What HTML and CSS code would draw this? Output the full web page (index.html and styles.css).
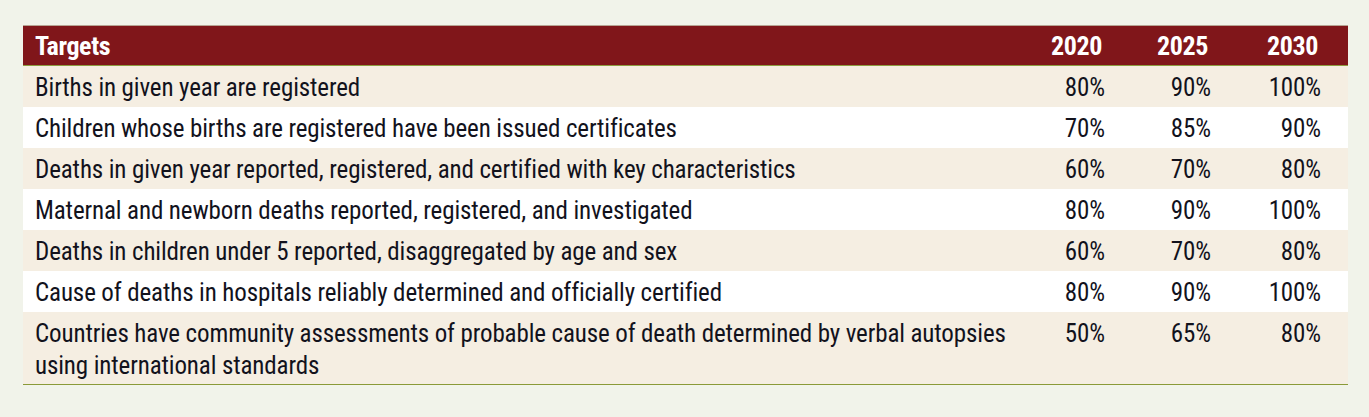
FILE: index.html
```html
<!DOCTYPE html>
<html lang="en">
<head>
<meta charset="utf-8">
<title>Targets</title>
<link rel="stylesheet" href="styles.css">
</head>
<body>
<table class="targets">
  <colgroup>
    <col class="col-label">
    <col class="col-num col-a">
    <col class="col-num col-b">
    <col class="col-num col-c">
  </colgroup>
  <thead>
    <tr>
      <th class="label">Targets</th>
      <th class="num">2020</th>
      <th class="num">2025</th>
      <th class="num">2030</th>
    </tr>
  </thead>
  <tbody>
    <tr class="shade">
      <td class="label">Births in given year are registered</td>
      <td class="num">80%</td><td class="num">90%</td><td class="num">100%</td>
    </tr>
    <tr>
      <td class="label">Children whose births are registered have been issued certificates</td>
      <td class="num">70%</td><td class="num">85%</td><td class="num">90%</td>
    </tr>
    <tr class="shade">
      <td class="label">Deaths in given year reported, registered, and certified with key characteristics</td>
      <td class="num">60%</td><td class="num">70%</td><td class="num">80%</td>
    </tr>
    <tr>
      <td class="label">Maternal and newborn deaths reported, registered, and investigated</td>
      <td class="num">80%</td><td class="num">90%</td><td class="num">100%</td>
    </tr>
    <tr class="shade">
      <td class="label">Deaths in children under 5 reported, disaggregated by age and sex</td>
      <td class="num">60%</td><td class="num">70%</td><td class="num">80%</td>
    </tr>
    <tr>
      <td class="label">Cause of deaths in hospitals reliably determined and officially certified</td>
      <td class="num">80%</td><td class="num">90%</td><td class="num">100%</td>
    </tr>
    <tr class="shade last">
      <td class="label">Countries have community assessments of probable cause of death determined by verbal autopsies<br>using international standards</td>
      <td class="num">50%</td><td class="num">65%</td><td class="num">80%</td>
    </tr>
  </tbody>
</table>
</body>
</html>
```
FILE: styles.css
```css
html, body {
  margin: 0;
  padding: 0;
  background: #f1f3ea;
}

body {
  padding: 25px 21px 0 23px;
  font-family: "Roboto Condensed", "Liberation Sans", sans-serif;
  color: #12121c;
}

.targets {
  width: 1325px;
  border-collapse: separate;
  border-spacing: 0;
  font-size: 25px;
  line-height: 32px;
  letter-spacing: -0.12px;
}

.col-a { width: 108px; }
.col-b { width: 106px; }
.col-c { width: 110px; }

.targets th {
  background: #80161a;
  color: #ffffff;
  font-weight: 700;
  font-size: 26px;
  letter-spacing: -0.4px;
  padding: 4px 0 3px 0;
  border-top: 1px solid #b7a493;
  border-bottom: 1px solid #8d9c3e;
  text-align: left;
  vertical-align: top;
}

.targets td {
  padding: 6px 0 3px 0;
  vertical-align: top;
  background: #ffffff;
}

.targets tr.shade td {
  background: #f5eee2;
}

.targets tr.last td {
  padding-bottom: 2px;
  border-bottom: 1px solid #8a9a38;
}

.targets .label {
  padding-left: 12px;
  text-align: left;
}

.targets .num {
  text-align: right;
  padding-right: 27px;
}

.targets th.num {
  padding-right: 30px;
}
```
